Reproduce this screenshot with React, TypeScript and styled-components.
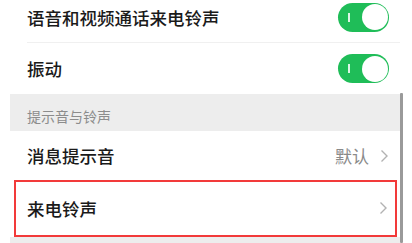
import styled, { createGlobalStyle } from 'styled-components'

const GlobalStyle = createGlobalStyle`
  html, body {
    margin: 0;
    padding: 0;
    background: #fff;
  }
  body {
    font-family: "Noto Sans CJK SC", "Noto Sans", sans-serif;
  }
`

const Screen = styled.div`
  width: 412px;
  height: 243px;
  overflow: hidden;
  display: flex;
  padding-left: 10px;
  box-sizing: border-box;
  background: #fff;
`

const Panel = styled.div`
  width: 390px;
  display: flex;
  flex-direction: column;
  background: #ededed;
`

const ScrollTrack = styled.div`
  width: 3px;
  padding-top: 93px;
  display: flex;
  flex-direction: column;
`

const ScrollThumb = styled.div`
  flex: 1;
  background: #9a9a9a;
  border-radius: 1px;
`

const Group = styled.div`
  background: #fff;
  display: flex;
  flex-direction: column;
`

const Row = styled.div<{ $height: number; $lift?: number }>`
  height: ${p => p.$height}px;
  display: flex;
  align-items: center;
  padding: 0 11px 0 17px;
  padding-bottom: ${p => p.$lift ?? 0}px;
  box-sizing: border-box;
`

const Divider = styled.div`
  height: 1px;
  margin-left: 17px;
  background: #f0f0f0;
`

const Label = styled.span`
  flex: 1;
  font-size: 17.5px;
  font-weight: 500;
  color: #1a1a1a;
  white-space: nowrap;
`

const Value = styled.span`
  font-size: 17px;
  color: #8a8a8a;
  margin-right: 11px;
`

const SectionHeader = styled.div`
  height: 37px;
  display: flex;
  align-items: flex-end;
  padding: 0 0 5px 17px;
  box-sizing: border-box;
  font-size: 14px;
  color: #8c8c8c;
`

const Highlight = styled.div`
  height: 57px;
  margin: 0 3px 0 4px;
  border: 2px solid #f23a3a;
  display: flex;
  align-items: center;
  padding: 0 7px 0 11px;
  padding-bottom: 1px;
  box-sizing: border-box;
  background: #fff;
`

const Toggle = styled.div`
  width: 51px;
  height: 29px;
  border-radius: 15px;
  background: #1fbd58;
  position: relative;
  flex-shrink: 0;
`

const ToggleMark = styled.span`
  position: absolute;
  left: 10px;
  top: 10px;
  width: 1.5px;
  height: 9px;
  background: rgba(255, 255, 255, 0.85);
`

const Knob = styled.span`
  position: absolute;
  right: 1.5px;
  top: 1.5px;
  width: 26px;
  height: 26px;
  border-radius: 50%;
  background: #fff;
`

const Chevron = () => (
  <svg width="9" height="14" viewBox="0 0 9 14" fill="none">
    <polyline points="1.5,1.5 7,7 1.5,12.5" stroke="#b2b2b2" strokeWidth="1.4" />
  </svg>
)

const Switch = () => (
  <Toggle>
    <ToggleMark />
    <Knob />
  </Toggle>
)

export default function App() {
  return (
    <>
      <GlobalStyle />
      <Screen>
        <Panel>
          <Group>
            <Row $height={42} $lift={8}>
              <Label>语音和视频通话来电铃声</Label>
              <Switch />
            </Row>
            <Divider />
            <Row $height={51}>
              <Label>振动</Label>
              <Switch />
            </Row>
          </Group>
          <SectionHeader>提示音与铃声</SectionHeader>
          <Group>
            <Row $height={49}>
              <Label>消息提示音</Label>
              <Value>默认</Value>
              <Chevron />
            </Row>
            <Highlight>
              <Label>来电铃声</Label>
              <Chevron />
            </Highlight>
          </Group>
        </Panel>
        <ScrollTrack>
          <ScrollThumb />
        </ScrollTrack>
      </Screen>
    </>
  )
}
